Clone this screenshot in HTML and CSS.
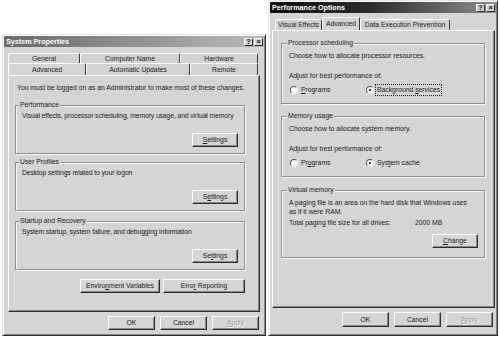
FILE: index.html
```html
<!DOCTYPE html>
<html>
<head>
<meta charset="utf-8">
<title>System Properties</title>
<link rel="stylesheet" href="styles.css">
</head>
<body>
<div class="desk">
  <div class="win sys">
    <div class="title"><span>System Properties</span><div class="tbtns"><span class="tbtn">?</span><span class="tbtn">×</span></div></div>
    <div class="tabs">
      <div class="tabrow back">
        <div class="tab t-gen">General</div>
        <div class="tab t-comp">Computer Name</div>
        <div class="tab t-hw">Hardware</div>
      </div>
      <div class="tabrow front">
        <div class="tab sel t-adv">Advanced</div>
        <div class="tab t-upd">Automatic Updates</div>
        <div class="tab t-rem">Remote</div>
      </div>
    </div>
    <div class="panel">
      <p class="note">You must be logged on as an Administrator to make most of these changes.</p>
      <div class="group g-perf">
        <div class="glabel">Performance</div>
        <div class="gdesc">Visual effects, processor scheduling, memory usage, and virtual memory</div>
        <div class="btn gbtn"><u>S</u>ettings</div>
      </div>
      <div class="group g-prof">
        <div class="glabel">User Profiles</div>
        <div class="gdesc">Desktop settings related to your logon</div>
        <div class="btn gbtn">S<u>e</u>ttings</div>
      </div>
      <div class="group g-start">
        <div class="glabel">Startup and Recovery</div>
        <div class="gdesc">System startup, system failure, and debugging information</div>
        <div class="btn gbtn">Se<u>t</u>tings</div>
      </div>
      <div class="envrow">
        <div class="btn b-env">Enviro<u>n</u>ment Variables</div>
        <div class="btn b-err">Erro<u>r</u>&nbsp;Reporting</div>
      </div>
    </div>
    <div class="btnrow">
      <div class="btn b-main">OK</div>
      <div class="btn b-main">Cancel</div>
      <div class="btn b-main dis"><u>A</u>pply</div>
    </div>
  </div>

  <div class="win perf">
    <div class="title"><span>Performance Options</span><div class="tbtns"><span class="tbtn">?</span><span class="tbtn">×</span></div></div>
    <div class="tabs">
      <div class="tabrow front">
        <div class="tab t-vis">Visual Effects</div>
        <div class="tab sel t-adv2">Advanced</div>
        <div class="tab t-dep">Data Execution Prevention</div>
      </div>
    </div>
    <div class="panel">
      <div class="group g-cpu">
        <div class="glabel">Processor scheduling</div>
        <div class="gdesc">Choose how to allocate processor resources.</div>
        <div class="adjust">Adjust for best performance of:</div>
        <div class="radios">
          <div class="radio r-first"><span class="rdot"></span><span><u>P</u>rograms</span></div>
          <div class="radio"><span class="rdot on"></span><span class="focus">Background <u>s</u>ervices</span></div>
        </div>
      </div>
      <div class="group g-mem">
        <div class="glabel">Memory usage</div>
        <div class="gdesc">Choose how to allocate system memory.</div>
        <div class="adjust">Adjust for best performance of:</div>
        <div class="radios">
          <div class="radio r-first"><span class="rdot"></span><span>Pr<u>o</u>grams</span></div>
          <div class="radio"><span class="rdot on"></span><span>Sys<u>t</u>em cache</span></div>
        </div>
      </div>
      <div class="group g-virt">
        <div class="glabel">Virtual memory</div>
        <div class="gdesc">A paging file is an area on the hard disk that Windows uses as if it were RAM.</div>
        <div class="total"><span class="tlabel">Total paging file size for all drives:</span><span>2000 MB</span></div>
        <div class="btn b-change"><u>C</u>hange</div>
      </div>
    </div>
    <div class="btnrow">
      <div class="btn b-main">OK</div>
      <div class="btn b-main">Cancel</div>
      <div class="btn b-main dis"><u>A</u>pply</div>
    </div>
  </div>
</div>
</body>
</html>
```

FILE: styles.css
```css
* { box-sizing: border-box; margin: 0; padding: 0; }
body {
  background: #fff;
  font-family: "Liberation Sans", Arial, sans-serif;
  font-size: 6.8px;
  line-height: 8px;
  color: #1a1a1a;
}
u { text-decoration: underline; text-underline-offset: 1px; }
.desk {
  display: flex;
  align-items: flex-start;
  gap: 2px;
  padding-left: 2px;
  height: 337px;
  overflow: hidden;
}
.win {
  display: flex;
  flex-direction: column;
  background: #d5d5d5;
  border: 1px solid;
  border-color: #e6e6e6 #2c2c2c #2c2c2c #e6e6e6;
  box-shadow: inset 1px 1px 0 #fff, inset -1px -1px 0 #8a8a8a;
  padding: 1px;
}
.sys { width: 264px; height: 302px; margin-top: 34px; }
.perf { width: 230px; height: 336px; }

.title {
  flex: none;
  height: 11px;
  display: flex;
  align-items: center;
  justify-content: space-between;
  padding: 0 1px 0 2px;
  color: #fff;
  font-weight: bold;
  font-size: 7.2px;
}
.sys .title { background: linear-gradient(90deg, #696969, #b9b9b9); }
.perf .title { background: linear-gradient(90deg, #0b0b0b 0%, #2e2e2e 45%, #8e8e8e 100%); }
.tbtns { display: flex; gap: 1px; }
.tbtn {
  width: 9px;
  height: 8px;
  background: #d5d5d5;
  border: 1px solid;
  border-color: #fff #303030 #303030 #fff;
  color: #000;
  font-size: 7px;
  line-height: 6px;
  text-align: center;
  font-weight: bold;
}

/* tabs */
.tabs { flex: none; display: flex; flex-direction: column; }
.sys .tabs { margin: 6px 4px 0; }
.perf .tabs { margin: 4px 0 0 5px; }
.tabrow { display: flex; align-items: flex-end; }
.tab {
  text-align: center;
  border-top: 1px solid #fff;
  border-left: 1px solid #fff;
  border-right: 1px solid #3a3a3a;
  border-radius: 2px 2px 0 0;
  background: #d2d2d2;
  white-space: nowrap;
}
.back .tab { height: 10px; line-height: 9px; }
.sys .front .tab { height: 12px; line-height: 11px; }
.perf .tab { height: 11px; line-height: 10px; }
.perf .tab.sel { height: 13px; line-height: 11px; }
.tab.sel { background: #d5d5d5; }
.t-gen { width: 72px; }
.t-comp { width: 100px; }
.t-hw { width: 78px; }
.t-adv { width: 78px; }
.t-upd { width: 104px; }
.t-rem { width: 68px; }
.t-vis { width: 47px; }
.t-adv2 { width: 38px; }
.t-dep { width: 90px; }

/* panel */
.panel {
  flex: none;
  display: flex;
  flex-direction: column;
  background: #d5d5d5;
  border: 1px solid;
  border-color: #fff #2c2c2c #2c2c2c #fff;
  box-shadow: inset -1px -1px 0 #8a8a8a;
}
.sys .panel { margin: 0 4px; height: 237px; padding: 8px 6px 0; }
.perf .panel { margin: 0 1px 0 2px; height: 278px; padding: 12px 8px 0; }
.note { padding-left: 2px; white-space: nowrap; }

/* group boxes */
.group {
  display: flex;
  flex-direction: column;
  border: 1px solid #8c8c8c;
  box-shadow: inset 1px 1px 0 #fbfbfb, 1px 1px 0 #fbfbfb;
}
.sys .group { width: 230px; padding: 0 6px 6px 6px; height: 49px; }
.sys .gdesc { white-space: nowrap; letter-spacing: -0.1px; }
.g-perf { margin-top: 13px; }
.g-prof { margin-top: 8px; }
.g-start { margin-top: 10px; }
.glabel {
  align-self: flex-start;
  margin: -5px 0 0 -3px;
  padding: 0 1px;
  background: #d5d5d5;
}
.gdesc { margin-top: 3px; }
.gbtn { margin-top: auto; align-self: flex-end; width: 46px; }

.perf .group { width: 204px; padding: 0 7px 9px 7px; }
.perf .glabel { margin-left: -2px; }
.perf .gdesc { margin-top: 5px; }
.g-mem { margin-top: 12px; }
.g-virt { margin-top: 13px; }
.g-virt .gdesc { margin-top: 4px; line-height: 9px; padding-right: 4px; }
.adjust { margin-top: 12px; }
.radios { display: flex; margin-top: 6px; align-items: center; }
.radio { display: flex; align-items: center; gap: 3px; }
.r-first { width: 76px; margin-left: 1px; }
.rdot {
  flex: none;
  width: 8px;
  height: 8px;
  border-radius: 50%;
  background: #fafafa;
  border: 1px solid;
  border-color: #5a5a5a #f4f4f4 #f4f4f4 #5a5a5a;
  display: flex;
  align-items: center;
  justify-content: center;
}
.rdot.on::after {
  content: "";
  width: 2px;
  height: 2px;
  border-radius: 50%;
  background: #000;
}
.focus { outline: 1px dotted #222; outline-offset: 1px; }
.total { display: flex; margin-top: 3px; }
.tlabel { width: 126px; }
.b-change { align-self: flex-end; margin-top: 7px; width: 46px; height: 15px; margin-right: -1px; }
.g-virt { padding-bottom: 6px; }

/* buttons */
.btn {
  flex: none;
  height: 14px;
  display: flex;
  align-items: center;
  justify-content: center;
  background: #d5d5d5;
  border: 1px solid;
  border-color: #fff #2c2c2c #2c2c2c #fff;
  box-shadow: inset -1px -1px 0 #8a8a8a;
  white-space: nowrap;
}
.envrow { display: flex; justify-content: flex-end; gap: 3px; width: 230px; margin-top: 9px; }
.b-env { width: 80px; }
.b-err { width: 82px; }
.btnrow { flex: none; display: flex; justify-content: flex-end; gap: 5px; margin-top: 4px; }
.sys .btnrow { padding-right: 5px; }
.perf .btnrow { padding-right: 3px; }
.b-main { width: 47px; }
.perf .b-main { height: 15px; }
.dis { color: #9a9a9a; text-shadow: 1px 1px 0 #fff; }
```
